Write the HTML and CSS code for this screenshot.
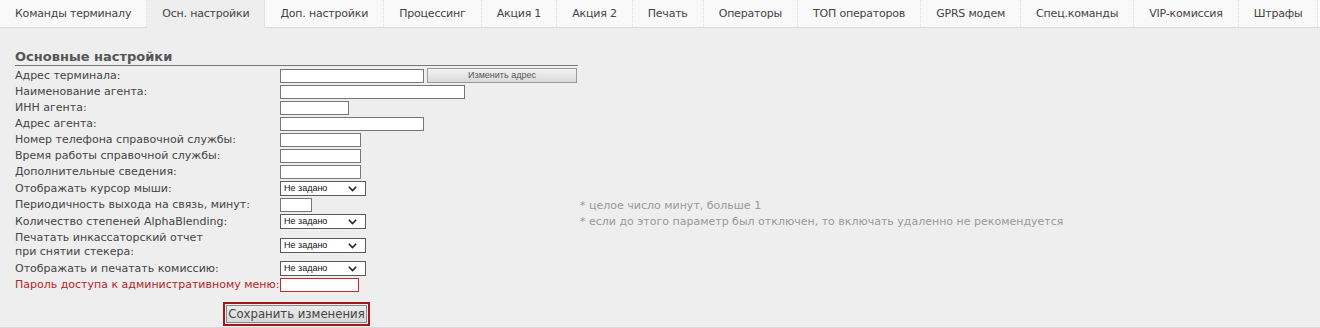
FILE: index.html
```html
<!DOCTYPE html>
<html lang="ru">
<head>
<meta charset="utf-8">
<title>Осн. настройки</title>
<link rel="stylesheet" href="styles.css">
</head>
<body>
<div class="tabs">
  <div class="tab">Команды терминалу</div>
  <div class="tab active">Осн. настройки</div>
  <div class="tab">Доп. настройки</div>
  <div class="tab">Процессинг</div>
  <div class="tab">Акция 1</div>
  <div class="tab">Акция 2</div>
  <div class="tab">Печать</div>
  <div class="tab">Операторы</div>
  <div class="tab">ТОП операторов</div>
  <div class="tab">GPRS модем</div>
  <div class="tab">Спец.команды</div>
  <div class="tab">VIP-комиссия</div>
  <div class="tab">Штрафы</div>
</div>
<div class="panel">
  <div class="section">
    <h2 class="title">Основные настройки</h2>
    <div class="form">
      <div class="row">
        <label>Адрес терминала:</label>
        <div class="ctrl"><input class="inp w144" type="text"><button class="small-btn" type="button">Изменить адрес</button></div>
        <div class="note"></div>
      </div>
      <div class="row">
        <label>Наименование агента:</label>
        <div class="ctrl"><input class="inp w185" type="text"></div>
        <div class="note"></div>
      </div>
      <div class="row">
        <label>ИНН агента:</label>
        <div class="ctrl"><input class="inp w69" type="text"></div>
        <div class="note"></div>
      </div>
      <div class="row">
        <label>Адрес агента:</label>
        <div class="ctrl"><input class="inp w144" type="text"></div>
        <div class="note"></div>
      </div>
      <div class="row">
        <label>Номер телефона справочной службы:</label>
        <div class="ctrl"><input class="inp w81" type="text"></div>
        <div class="note"></div>
      </div>
      <div class="row">
        <label>Время работы справочной службы:</label>
        <div class="ctrl"><input class="inp w81" type="text"></div>
        <div class="note"></div>
      </div>
      <div class="row">
        <label>Дополнительные сведения:</label>
        <div class="ctrl"><input class="inp w81" type="text"></div>
        <div class="note"></div>
      </div>
      <div class="row">
        <label>Отображать курсор мыши:</label>
        <div class="ctrl"><span class="sel"><select><option>Не задано</option></select><svg class="chev" width="9" height="6" viewBox="0 0 9 6"><path d="M0.8 0.8 L4.5 4.6 L8.2 0.8" fill="none" stroke="#222" stroke-width="1.5"/></svg></span></div>
        <div class="note"></div>
      </div>
      <div class="row">
        <label>Периодичность выхода на связь, минут:</label>
        <div class="ctrl"><input class="inp w32" type="text"></div>
        <div class="note">* целое число минут, больше 1</div>
      </div>
      <div class="row">
        <label>Количество степеней AlphaBlending:</label>
        <div class="ctrl"><span class="sel"><select><option>Не задано</option></select><svg class="chev" width="9" height="6" viewBox="0 0 9 6"><path d="M0.8 0.8 L4.5 4.6 L8.2 0.8" fill="none" stroke="#222" stroke-width="1.5"/></svg></span></div>
        <div class="note">* если до этого параметр был отключен, то включать удаленно не рекомендуется</div>
      </div>
      <div class="row">
        <label>Печатать инкассаторский отчет<br>при снятии стекера:</label>
        <div class="ctrl"><span class="sel"><select><option>Не задано</option></select><svg class="chev" width="9" height="6" viewBox="0 0 9 6"><path d="M0.8 0.8 L4.5 4.6 L8.2 0.8" fill="none" stroke="#222" stroke-width="1.5"/></svg></span></div>
        <div class="note"></div>
      </div>
      <div class="row">
        <label>Отображать и печатать комиссию:</label>
        <div class="ctrl"><span class="sel"><select><option>Не задано</option></select><svg class="chev" width="9" height="6" viewBox="0 0 9 6"><path d="M0.8 0.8 L4.5 4.6 L8.2 0.8" fill="none" stroke="#222" stroke-width="1.5"/></svg></span></div>
        <div class="note"></div>
      </div>
      <div class="row">
        <label class="warn">Пароль доступа к административному меню:</label>
        <div class="ctrl"><input class="inp inp-warn w79" type="password"></div>
        <div class="note"></div>
      </div>
    </div>
    <div class="actions">
      <span class="save-wrap"><button class="save" type="button">Сохранить изменения</button></span>
    </div>
  </div>
</div>
</body>
</html>
```

FILE: styles.css
```css
* { box-sizing: border-box; }

body {
  margin: 0;
  background: #fff;
  font-family: "DejaVu Sans", Verdana, sans-serif;
  font-size: 11px;
  color: #444;
}

.tabs {
  display: flex;
  height: 28px;
  border-bottom: 1px solid #dcdcdc;
  background: #fff;
}

.tab {
  padding: 0 15px;
  line-height: 27px;
  font-size: 11px;
  letter-spacing: -0.2px;
  color: #444;
  background: #f9f9f9;
  border-right: 1px dotted #dcdcdc;
  white-space: nowrap;
}

.tab.active {
  background: #eee;
  border-right: 1px solid #e2e2e2;
  height: 28px;
  margin-bottom: -1px;
}

.panel {
  background: #eee;
  height: 300px;
  border-bottom: 1px solid #d8d8d8;
  padding: 21px 0 0 15px;
}

.section {
  width: 563px;
}

.title {
  margin: 0;
  font-size: 13px;
  line-height: 16px;
  font-weight: bold;
  color: #555;
  border-bottom: 1px solid #777;
}

.form {
  margin-top: 1px;
}

.row {
  display: grid;
  grid-template-columns: 265px 300px auto;
  align-items: center;
  padding: 1px 0;
}

.row label {
  line-height: 14px;
  white-space: nowrap;
  color: #444;
}

.row label.warn {
  color: #b3262a;
}

.ctrl {
  display: flex;
  align-items: center;
  gap: 3px;
}

.note {
  color: #999;
  white-space: nowrap;
}

.inp {
  height: 14px;
  margin: 0;
  padding: 0 2px;
  border: 1px solid #777;
  background: #fff;
  font-size: 10px;
}

.inp-warn {
  border-color: #c8282c;
}

.w144 { width: 144px; }
.w185 { width: 185px; }
.w69 { width: 69px; }
.w81 { width: 81px; }
.w32 { width: 32px; }
.w79 { width: 79px; }

.small-btn {
  width: 150px;
  height: 15px;
  margin: 0;
  padding: 0;
  border: 1px solid #9a9a9a;
  background: linear-gradient(#f2f2f2, #dadada);
  font-family: "Liberation Sans", Arial, sans-serif;
  font-size: 9px;
  color: #555;
  line-height: 13px;
}

.sel {
  position: relative;
  display: inline-block;
  width: 86px;
  height: 15px;
}

.sel select {
  width: 100%;
  height: 15px;
  margin: 0;
  padding: 0 0 0 3px;
  appearance: none;
  -webkit-appearance: none;
  border: 1px solid #5a5a5a;
  border-radius: 0;
  background: #fff;
  font-family: "Liberation Sans", Arial, sans-serif;
  font-size: 9px;
  color: #111;
  line-height: 13px;
}

.chev {
  position: absolute;
  right: 9px;
  top: 5px;
}

.actions {
  margin-top: 9px;
  text-align: center;
}

.save-wrap {
  display: inline-block;
  border: 2px solid #a01818;
  padding: 1px;
  line-height: 0;
}

.save {
  height: 18px;
  margin: 0;
  padding: 0 1px;
  border: 1px solid #8a8a8a;
  background: linear-gradient(#ececec, #d9d9d9);
  font-family: "DejaVu Sans Condensed", "DejaVu Sans", sans-serif;
  font-stretch: condensed;
  font-size: 13px;
  line-height: 16px;
  color: #444;
}
```
